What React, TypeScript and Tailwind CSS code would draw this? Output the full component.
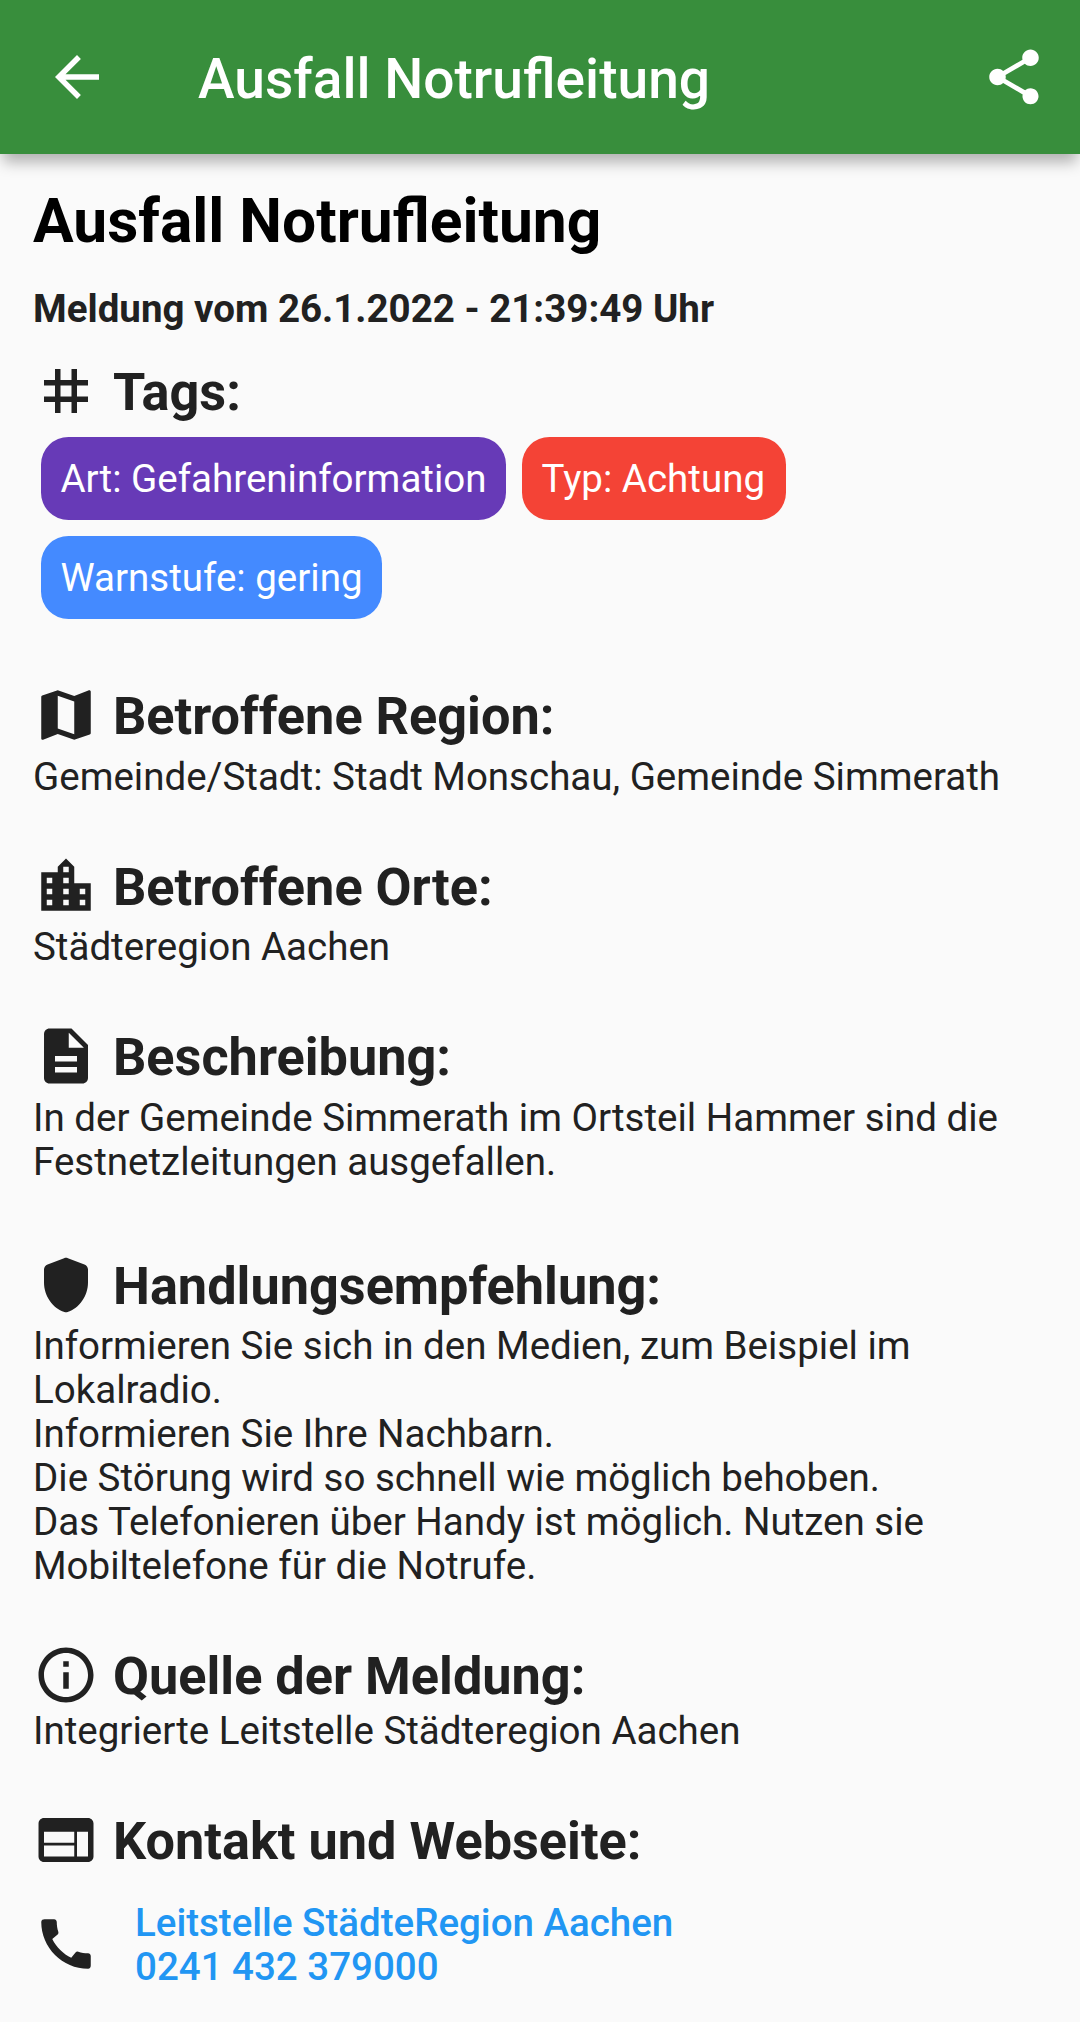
import React from "react";
import {
  MdArrowBack, MdShare, MdTag, MdMap, MdLocationCity, MdDescription, MdInfoOutline, MdWeb, MdCall,
} from "react-icons/md";

type IconComponent = React.ComponentType<{ className?: string }>;

function RoundedShield({ className }: { className?: string }) {
  return (
    <svg viewBox="0 0 24 24" fill="currentColor" className={className}>
      <path d="M11.3 2.26l-6 2.25C4.52 4.81 4 5.55 4 6.39v4.7c0 4.83 3.13 9.37 7.43 10.75.37.12.77.12 1.14 0C16.87 20.46 20 15.92 20 11.09v-4.7c0-.83-.52-1.58-1.3-1.87l-6-2.25c-.45-.18-.95-.18-1.4-.01z" />
    </svg>
  );
}

function Heading({ icon: Icon, children }: { icon: IconComponent; children: React.ReactNode }) {
  return (
    <h2 className="flex h-[66px] items-start text-[52.25px] leading-[61px] font-bold">
      <Icon className="size-[66px] shrink-0" />
      <span className="ml-[14px] pt-1">{children}</span>
    </h2>
  );
}

function Text({ children }: { children: React.ReactNode }) {
  return <p className="text-[38.5px] leading-[44px] whitespace-pre-line">{children}</p>;
}

export default function App() {
  return (
    <div className="h-[2022px] w-[1080px] overflow-hidden bg-[#fafafa] font-['Roboto',sans-serif] text-[#212121]">
      <header className="relative flex h-[154px] items-center bg-[#388e3c] pr-[33px] pl-[44px] text-white shadow-[0_11px_14px_-3px_rgba(0,0,0,0.3)]">
        <MdArrowBack className="size-[66px]" />
        <h1 className="ml-[88px] grow pt-[3px] text-[55.1px] leading-[64px] font-medium">Ausfall Notrufleitung</h1>
        <MdShare className="size-[66px]" />
      </header>
      <main className="px-[33px]">
        <h1 className="pt-8 text-[60.5px] leading-[71px] font-bold text-black">Ausfall Notrufleitung</h1>
        <p className="mt-[29px] text-[38.5px] leading-[45px] font-bold">Meldung vom 26.1.2022 - 21:39:49 Uhr</p>
        <section className="mt-[27px]">
          <Heading icon={MdTag}>Tags:</Heading>
          <div className="mt-[13px] ml-[8.25px] flex flex-wrap gap-x-[16.5px] gap-y-4 text-[38.5px] leading-[45px] text-white">
            <span className="rounded-[27.5px] bg-[#673ab7] px-[19.25px] py-[19px]">Art: Gefahreninformation</span>
            <span className="rounded-[27.5px] bg-[#f44336] py-[19px] pr-[21px] pl-[19.25px]">Typ: Achtung</span>
            <span className="rounded-[27.5px] bg-[#448aff] px-[19.25px] py-[19px]">Warnstufe: gering</span>
          </div>
        </section>
        <section className="mt-[63px]">
          <Heading icon={MdMap}>Betroffene Region:</Heading>
          <div className="mt-[7px]"><Text>Gemeinde/Stadt: Stadt Monschau, Gemeinde Simmerath</Text></div>
        </section>
        <section className="mt-[54px]">
          <Heading icon={MdLocationCity}>Betroffene Orte:</Heading>
          <div className="mt-[6px]"><Text>Städteregion Aachen</Text></div>
        </section>
        <section className="mt-[54px]">
          <Heading icon={MdDescription}>Beschreibung:</Heading>
          <div className="mt-[7px]"><Text>In der Gemeinde Simmerath im Ortsteil Hammer sind die Festnetzleitungen ausgefallen.</Text></div>
        </section>
        <section className="mt-[67.5px]">
          <Heading icon={RoundedShield}>Handlungsempfehlung:</Heading>
          <div className="mt-[6.5px]"><Text>{"Informieren Sie sich in den Medien, zum Beispiel im Lokalradio.\nInformieren Sie Ihre Nachbarn.\nDie Störung wird so schnell wie möglich behoben.\nDas Telefonieren über Handy ist möglich. Nutzen sie Mobiltelefone für die Notrufe."}</Text></div>
        </section>
        <section className="mt-[54px]">
          <Heading icon={MdInfoOutline}>Quelle der Meldung:</Heading>
          <div className="mt-px"><Text>Integrierte Leitstelle Städteregion Aachen</Text></div>
        </section>
        <section className="mt-[54px]">
          <Heading icon={MdWeb}>Kontakt und Webseite:</Heading>
          <div className="mt-[28px] flex items-start">
            <MdCall className="mt-[10px] size-[66px]" />
            <p className="ml-9 text-[38.5px] leading-[44px] font-medium text-[#2196f3]">Leitstelle StädteRegion Aachen<br />0241 432 379000</p>
          </div>
        </section>
      </main>
    </div>
  );
}
